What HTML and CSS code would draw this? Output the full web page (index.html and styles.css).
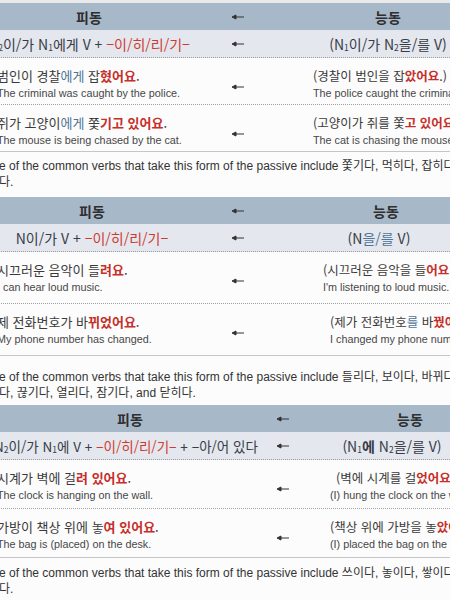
FILE: index.html
```html
<!DOCTYPE html>
<html lang="ko">
<head>
<meta charset="utf-8">
<title>피동</title>
<link rel="stylesheet" href="styles.css">
</head>
<body>
<div class="page">
  <section class="tbl tbl-a">
    <div class="row head">
      <div class="cell">피동</div>
      <div class="cell arr"><svg class="arrow" viewBox="0 0 12 6" width="12" height="6"><path d="M0 3 L4 1 L4 5 Z"/><path d="M3.5 3 H12" stroke-width="1"/></svg></div>
      <div class="cell">능동</div>
    </div>
    <div class="row pat">
      <div class="cell">N<sub>2</sub>이/가 N<sub>1</sub>에게 V + <span class="red">−이/히/리/기−</span></div>
      <div class="cell arr"><svg class="arrow" viewBox="0 0 12 6" width="12" height="6"><path d="M0 3 L4 1 L4 5 Z"/><path d="M3.5 3 H12" stroke-width="1"/></svg></div>
      <div class="cell">(N<sub>1</sub>이/가 N<sub>2</sub>을/를 V)</div>
    </div>
    <div class="row ex">
      <div class="pas">
        <p class="ko">범인이 경찰<span class="blue">에게</span> 잡<b class="hl">혔어요</b>.</p>
        <p class="en">The criminal was caught by the police.</p>
      </div>
      <div class="arr"><svg class="arrow" viewBox="0 0 12 6" width="12" height="6"><path d="M0 3 L4 1 L4 5 Z"/><path d="M3.5 3 H12" stroke-width="1"/></svg></div>
      <div class="act in-a">
        <p class="ko">(경찰이 범인을 잡<b class="hl">았어요</b>.)</p>
        <p class="en">The police caught the criminal.</p>
      </div>
    </div>
    <div class="row ex last">
      <div class="pas">
        <p class="ko">쥐가 고양이<span class="blue">에게</span> 쫓<b class="hl">기고 있어요</b>.</p>
        <p class="en">The mouse is being chased by the cat.</p>
      </div>
      <div class="arr"><svg class="arrow" viewBox="0 0 12 6" width="12" height="6"><path d="M0 3 L4 1 L4 5 Z"/><path d="M3.5 3 H12" stroke-width="1"/></svg></div>
      <div class="act in-a">
        <p class="ko">(고양이가 쥐를 쫓<b class="hl">고 있어요</b>.)</p>
        <p class="en">The cat is chasing the mouse.</p>
      </div>
    </div>
  </section>
  <p class="note note-a">e of the common verbs that take this form of the passive include 쫓기다, 먹히다, 잡히다, 물리<br>다.</p>

  <section class="tbl tbl-b">
    <div class="row head">
      <div class="cell">피동</div>
      <div class="cell arr"><svg class="arrow" viewBox="0 0 12 6" width="12" height="6"><path d="M0 3 L4 1 L4 5 Z"/><path d="M3.5 3 H12" stroke-width="1"/></svg></div>
      <div class="cell">능동</div>
    </div>
    <div class="row pat">
      <div class="cell">N이/가 V + <span class="red">−이/히/리/기−</span></div>
      <div class="cell arr"><svg class="arrow" viewBox="0 0 12 6" width="12" height="6"><path d="M0 3 L4 1 L4 5 Z"/><path d="M3.5 3 H12" stroke-width="1"/></svg></div>
      <div class="cell">(N<span class="blue">을/를</span> V)</div>
    </div>
    <div class="row ex">
      <div class="pas">
        <p class="ko">시끄러운 음악이 들<b class="hl">려요</b>.</p>
        <p class="en">I can hear loud music.</p>
      </div>
      <div class="arr"><svg class="arrow" viewBox="0 0 12 6" width="12" height="6"><path d="M0 3 L4 1 L4 5 Z"/><path d="M3.5 3 H12" stroke-width="1"/></svg></div>
      <div class="act in-b1">
        <p class="ko">(시끄러운 음악을 들<b class="hl">어요</b>.)</p>
        <p class="en">I'm listening to loud music.</p>
      </div>
    </div>
    <div class="row ex last">
      <div class="pas">
        <p class="ko">제 전화번호가 바<b class="hl">뀌었어요</b>.</p>
        <p class="en">My phone number has changed.</p>
      </div>
      <div class="arr"><svg class="arrow" viewBox="0 0 12 6" width="12" height="6"><path d="M0 3 L4 1 L4 5 Z"/><path d="M3.5 3 H12" stroke-width="1"/></svg></div>
      <div class="act in-b2">
        <p class="ko">(제가 전화번호<span class="blue">를</span> 바<b class="hl">꿨어요</b>.)</p>
        <p class="en">I changed my phone number.</p>
      </div>
    </div>
  </section>
  <p class="note note-b">e of the common verbs that take this form of the passive include 들리다, 보이다, 바뀌다, 막히다, 놓이<br>다, 끊기다, 열리다, 잠기다, and 닫히다.</p>

  <section class="tbl tbl-c">
    <div class="row head">
      <div class="cell">피동</div>
      <div class="cell arr"><svg class="arrow" viewBox="0 0 12 6" width="12" height="6"><path d="M0 3 L4 1 L4 5 Z"/><path d="M3.5 3 H12" stroke-width="1"/></svg></div>
      <div class="cell">능동</div>
    </div>
    <div class="row pat">
      <div class="cell">N<sub>2</sub>이/가 N<sub>1</sub>에 V + <span class="red">−이/히/리/기−</span> + −아/어 있다</div>
      <div class="cell arr"><svg class="arrow" viewBox="0 0 12 6" width="12" height="6"><path d="M0 3 L4 1 L4 5 Z"/><path d="M3.5 3 H12" stroke-width="1"/></svg></div>
      <div class="cell">(N<sub>1</sub><b>에</b> N<sub>2</sub>을/를 V)</div>
    </div>
    <div class="row ex">
      <div class="pas">
        <p class="ko">시계가 벽에 걸<b class="hl">려 있어요</b>.</p>
        <p class="en">The clock is hanging on the wall.</p>
      </div>
      <div class="arr"><svg class="arrow" viewBox="0 0 12 6" width="12" height="6"><path d="M0 3 L4 1 L4 5 Z"/><path d="M3.5 3 H12" stroke-width="1"/></svg></div>
      <div class="act in-c">
        <p class="ko shift">(벽에 시계를 걸<b class="hl">었어요</b>.)</p>
        <p class="en">(I) hung the clock on the wall.</p>
      </div>
    </div>
    <div class="row ex last">
      <div class="pas">
        <p class="ko">가방이 책상 위에 놓<b class="hl">여 있어요</b>.</p>
        <p class="en">The bag is (placed) on the desk.</p>
      </div>
      <div class="arr"><svg class="arrow" viewBox="0 0 12 6" width="12" height="6"><path d="M0 3 L4 1 L4 5 Z"/><path d="M3.5 3 H12" stroke-width="1"/></svg></div>
      <div class="act in-c">
        <p class="ko">(책상 위에 가방을 놓<b class="hl">았어요</b>.)</p>
        <p class="en">(I) placed the bag on the desk.</p>
      </div>
    </div>
  </section>
  <p class="note note-c">e of the common verbs that take this form of the passive include 쓰이다, 놓이다, 쌓이다, 덮이<br>다.</p>
</div>
</body>
</html>
```

FILE: styles.css
```css
* { box-sizing: border-box; margin: 0; padding: 0; }
html, body {
  width: 450px;
  height: 600px;
  overflow: hidden;
  background: #fcfcfc;
}
body {
  font-family: "Liberation Sans", "Noto Sans CJK KR", sans-serif;
  color: #333;
}
.page {
  width: 540px;
  margin-left: -12px;
  padding-top: 3px;
  background: linear-gradient(#e9e9e9, #e9e9e9) top / 100% 3px no-repeat;
}
.row {
  display: grid;
  grid-template-columns: var(--c1) var(--c2) var(--c3);
}
.tbl-a { --c1: 202px; --c2: 96px; --c3: 204px; }
.tbl-b { --c1: 208px; --c2: 84px; --c3: 212px; }
.tbl-c { --c1: 284px; --c2: 22px; --c3: 232px; }

.cell { text-align: center; white-space: nowrap; }
.arr { display: flex; justify-content: center; align-items: center; }
.arrow { display: block; fill: #333; stroke: #333; }

.head {
  height: 27px;
  align-items: center;
  background: #a7b8c9;
  font: bold 14px "Noto Sans CJK KR", sans-serif;
  color: #2e2e2e;
}
.pat {
  height: 28px;
  align-items: center;
  background: #e4e7ed;
  border-bottom: 1px dotted #9c9c9c;
  font: 14px "Noto Sans CJK KR", sans-serif;
  color: #363c48;
}
.pat sub { font-size: 8.5px; vertical-align: -1px; }
.tbl-b .pat .cell:last-child { padding-right: 14px; }
.tbl-c .pat { font-size: 13.5px; }
.tbl-c .pat .cell:first-child { padding-right: 8px; }
.tbl-c .pat .cell:last-child { padding-right: 36px; font-size: 14px; }
.red { color: #cc3b33; }
.blue { color: #4f7498; }

.ex {
  padding: 9px 0 2px;
  border-bottom: 1px dotted #a0a0a0;
  white-space: nowrap;
}
.tbl-b .ex { padding-bottom: 7px; }
.tbl-c .ex { padding-bottom: 4px; }
.ex.last { border-bottom: 1px solid #c6c6c6; }
.ex .arr { padding-top: 4px; }
.pas { padding-left: 9px; }
.in-a { padding-left: 27px; }
.in-b1 { padding-left: 43px; }
.in-b2 { padding-left: 50px; }
.in-c { padding-left: 36px; }
.shift { padding-left: 6px; }

.ko {
  font: 13px/17px "Noto Sans CJK KR", sans-serif;
  color: #3a3a3a;
}
.act .ko { font-size: 12.5px; }
.hl { color: #c62f2a; font-weight: bold; }
.en {
  font: 10.8px/18px "Liberation Sans", sans-serif;
  color: #474747;
}

.note {
  padding-left: 11px;
  font: 12px/16px "Liberation Sans", "Noto Sans CJK KR", sans-serif;
  color: #333;
  white-space: nowrap;
}
.note-a { padding-top: 6px; padding-bottom: 7px; }
.note-b { padding-top: 13px; padding-bottom: 4px; }
.note-c { padding-top: 7px; }
```
